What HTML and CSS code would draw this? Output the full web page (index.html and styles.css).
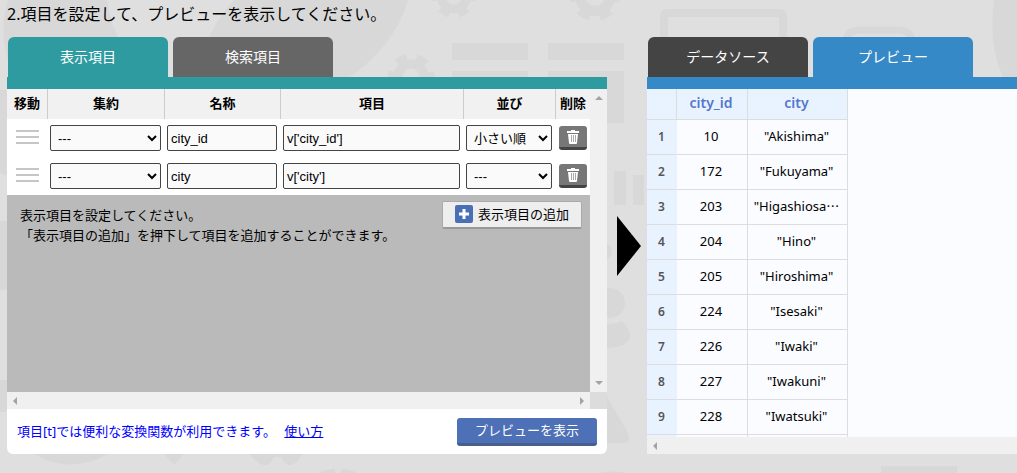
FILE: index.html
```html
<!DOCTYPE html>
<html lang="ja">
<head>
<meta charset="utf-8">
<title>項目設定</title>
<link rel="stylesheet" href="styles.css">
</head>
<body>
<svg class="backdrop" viewBox="0 0 1017 473" preserveAspectRatio="xMinYMin slice" aria-hidden="true">
  <g fill="#d8d8d8">
    <path d="M8 0H107Q110 25 124 48Q140 75 170 90H22Q-6 45 8 0Z"/>
    <path d="M0 90H7V175Q3 176 0 172ZM0 221H7V290H0ZM0 380H7V412H0Z"/>
    <path d="M234 0H408Q395 45 350 77H195Q206 30 234 0Z"/>
    <path d="M452 43h76v17h-76zM548 43h76v17h-76zM452 71h76v17h-76zM548 71h76v52h-76z"/>
    <path d="M614 171h12v34h-12zM633 175h11v30h-11z"/>
    <circle cx="610" cy="303" r="15"/><circle cx="603" cy="251" r="9"/>
    <path d="M600 324Q614 325 622 321Q631 330 630 338Q625 349 600 348Z"/>
    <path d="M603 390L628 433Q631 441 625 443H600Z"/>
    <path d="M34 454H108Q70 475 34 454ZM164 454h20l-10 11zM250 454h52q-6 12-13 11-4-1-8-8l-7 0q-5 10-10 8-7-1-14-11z"/>
    <path d="M1017 0H994Q988 45 1003 77H1017ZM881 466h76v7h-76z"/>
    <path d="M318 473q4-3 17-4v4zM341 469q10 0 16 4h-16zM598 473q16-3 28 0z"/>
  </g>
  <path d="M664 40V16q0-3 3-3H780q3 0 3 3V40" fill="none" stroke="#d8d8d8" stroke-width="8"/>
  <path d="M846 40q2-10 14-10h38q12 0 14 10" fill="none" stroke="#d8d8d8" stroke-width="7"/>
  <g fill="none" stroke="#d8d8d8">
    <circle cx="454" cy="-4" r="13" stroke-width="9"/>
    <circle cx="454" cy="-4" r="19" stroke-width="6" stroke-dasharray="10 9.9" stroke-dashoffset="5"/>
    <circle cx="595" cy="-4" r="15" stroke-width="10"/>
    <circle cx="595" cy="-4" r="22" stroke-width="6" stroke-dasharray="12 11.04" stroke-dashoffset="6"/>
    <circle cx="411" cy="77" r="13" stroke-width="9"/>
    <circle cx="411" cy="77" r="20" stroke-width="7" stroke-dasharray="11 9.94" stroke-dashoffset="5.5"/>
  </g>
</svg>
<main class="page">
  <h1 class="title">2.項目を設定して、プレビューを表示してください。</h1>
  <div class="columns">
    <section class="editor">
      <nav class="tabs">
        <button class="tab tab-teal" type="button">表示項目</button>
        <button class="tab tab-gray" type="button">検索項目</button>
      </nav>
      <div class="panel panel-teal">
        <div class="scroll-area">
          <div class="scroll-content">
            <table class="fields">
              <colgroup><col class="c-move"><col class="c-agg"><col class="c-name"><col><col class="c-sort"><col class="c-del"></colgroup>
              <thead><tr><th>移動</th><th>集約</th><th>名称</th><th>項目</th><th>並び</th><th>削除</th></tr></thead>
              <tbody>
                <tr>
                  <td><span class="handle"></span></td>
                  <td><select class="field select" aria-label="集約"><option>---</option></select></td>
                  <td><input class="field" type="text" aria-label="名称" value="city_id"></td>
                  <td><input class="field" type="text" aria-label="項目" value="v['city_id']"></td>
                  <td><select class="field select" aria-label="並び"><option>小さい順</option></select></td>
                  <td class="cell-del"><button class="delete" type="button" aria-label="削除"><svg width="12" height="14" viewBox="0 0 12 14"><path fill="#fff" d="M4 0h4v1h4v2H0V1h4zM1 4h10l-1 9q0 1-1 1H3q-1 0-1-1z"/><path stroke="#aaa" d="M4.500 5v7M6.500 5v7M8.500 5v7"/></svg></button></td>
                </tr>
                <tr>
                  <td><span class="handle"></span></td>
                  <td><select class="field select" aria-label="集約"><option>---</option></select></td>
                  <td><input class="field" type="text" aria-label="名称" value="city"></td>
                  <td><input class="field" type="text" aria-label="項目" value="v['city']"></td>
                  <td><select class="field select" aria-label="並び"><option>---</option></select></td>
                  <td class="cell-del"><button class="delete" type="button" aria-label="削除"><svg width="12" height="14" viewBox="0 0 12 14"><path fill="#fff" d="M4 0h4v1h4v2H0V1h4zM1 4h10l-1 9q0 1-1 1H3q-1 0-1-1z"/><path stroke="#aaa" d="M4.500 5v7M6.500 5v7M8.500 5v7"/></svg></button></td>
                </tr>
              </tbody>
            </table>
            <div class="guide">
              <p class="guide-text">表示項目を設定してください。<br>「表示項目の追加」を押下して項目を追加することができます。</p>
              <button class="add" type="button"><svg width="18" height="18" viewBox="0 0 18 18"><rect width="18" height="18" rx="2" fill="#4a6fb5"/><path d="M9 4v10M4 9h10" stroke="#fff" stroke-width="3"/></svg>表示項目の追加</button>
            </div>
          </div>
          <div class="bar-v"><i class="tri up"></i><i class="tri down"></i></div>
          <div class="bar-h"><i class="tri left"></i><i class="tri right"></i></div>
          <div class="corner"></div>
        </div>
        <footer class="foot">
          <p class="hint">項目[t]では便利な変換関数が利用できます。 <a class="link" href="#">使い方</a></p>
          <button class="run" type="button">プレビューを表示</button>
        </footer>
      </div>
    </section>
    <svg class="arrow" width="24" height="60" viewBox="0 0 24 60" aria-hidden="true"><path d="M0 0L24 30L0 60Z"/></svg>
    <section class="preview">
      <nav class="tabs">
        <button class="tab tab-dark" type="button">データソース</button>
        <button class="tab tab-blue" type="button">プレビュー</button>
      </nav>
      <div class="panel panel-blue">
        <div class="sheet">
          <table class="data">
            <colgroup><col class="d-no"><col class="d-id"><col class="d-city"></colgroup>
            <thead><tr><th></th><th>city_id</th><th>city</th></tr></thead>
            <tbody>
              <tr><th>1</th><td>10</td><td>"Akishima"</td></tr>
              <tr><th>2</th><td>172</td><td>"Fukuyama"</td></tr>
              <tr><th>3</th><td>203</td><td>"Higashiosa⋯</td></tr>
              <tr><th>4</th><td>204</td><td>"Hino"</td></tr>
              <tr><th>5</th><td>205</td><td>"Hiroshima"</td></tr>
              <tr><th>6</th><td>224</td><td>"Isesaki"</td></tr>
              <tr><th>7</th><td>226</td><td>"Iwaki"</td></tr>
              <tr><th>8</th><td>227</td><td>"Iwakuni"</td></tr>
              <tr><th>9</th><td>228</td><td>"Iwatsuki"</td></tr>
              <tr><th></th><td></td><td></td></tr>
            </tbody>
          </table>
        </div>
        <div class="bar-h"><i class="tri left"></i></div>
      </div>
    </section>
  </div>
</main>
</body>
</html>
```
FILE: styles.css
```css
* { box-sizing: border-box; }
body {
  margin: 0;
  background: #dfdfdf;
  color: #000;
  font: 13px/20px "Noto Sans", "Noto Sans CJK JP", sans-serif;
  overflow: hidden;
}
button, input, select { font: inherit; margin: 0; }
p { margin: 0; }
.backdrop { position: absolute; inset: 0; width: 100%; height: 100%; z-index: -1; }
.page { padding: 2px 0 0 7px; }
.title { margin: 0; font-size: 16px; line-height: 24px; font-weight: 400; }
.columns { display: flex; gap: 10px; padding-top: 11px; }
.editor { flex: 0 0 600px; }
.preview { flex: 1; min-width: 0; margin-left: -4px; }
.arrow { align-self: center; display: block; flex: none; }

.tabs { display: flex; gap: 5px; padding-left: 1px; }
.tab {
  width: 160px; height: 40px; padding: 0;
  border: 0; border-radius: 6px 6px 0 0;
  color: #fff; font-size: 14px;
}
.tab-teal { background: #2e9ba0; }
.tab-gray { background: #666; }
.tab-dark { background: #444; }
.tab-blue { background: #3589c6; }
.panel { border-top: 12px solid; background: #fff; }
.panel-teal { border-color: #2e9ba0; border-radius: 0 0 6px 6px; }
.panel-blue { border-color: #3589c6; background: #fbfcff; }

.scroll-area { display: grid; grid-template-columns: 1fr 17px; grid-template-rows: 303px 17px; }
.scroll-content { display: flex; flex-direction: column; background: #bababa; }
.bar-v, .bar-h { display: flex; justify-content: space-between; align-items: center; background: #f0f0f0; }
.bar-v { flex-direction: column; padding: 7px 0; }
.bar-h { height: 17px; padding: 0 6px; }
.corner { background: #dcdcdc; }
.tri { display: block; border: 4px solid transparent; }
.up { border-top: 0; border-bottom-color: #a3a3a3; }
.down { border-bottom: 0; border-top-color: #a3a3a3; }
.left { border-left: 0; border-right-color: #a3a3a3; }
.right { border-right: 0; border-left-color: #a3a3a3; }

.fields { width: 100%; table-layout: fixed; border-collapse: separate; border-spacing: 0; background: #fff; }
.c-move { width: 41px; }
.c-agg { width: 117px; }
.c-name { width: 116px; }
.c-sort { width: 92px; }
.c-del { width: 34px; }
.fields th { height: 30px; padding: 0 0 2px; background: #f1f1f1; border-right: 1px solid #ccc; }
.fields th:last-child { border-right: 0; }
.fields td { height: 38px; padding: 0 4px 0 2px; vertical-align: middle; }
.fields .cell-del { padding: 0 3px; }
.field {
  display: block; width: 100%; height: 26px; padding: 0 3px;
  border: 1px solid #444; border-radius: 2px;
  background: #fafafa; color: #000;
  font: 13px "Liberation Sans", "Noto Sans CJK JP", sans-serif;
}
.select { padding: 0 0 0 3px; }
.handle {
  display: block; width: 23px; height: 14px; margin: 0 0 3px 7px;
  border: solid #c6c6c6; border-width: 2px 0;
  background: linear-gradient(#c6c6c6, #c6c6c6) center / 100% 2px no-repeat;
}
.delete {
  display: grid; place-items: center; width: 28px; height: 24px; padding: 0;
  border: 0; border-bottom: 3px solid #444; border-radius: 3px; background: #777;
}

.guide { display: flex; justify-content: space-between; align-items: flex-start; padding: 6px 8px 0 13px; }
.guide-text { padding-top: 4px; }
.add {
  display: flex; align-items: center; justify-content: center; gap: 5px;
  width: 140px; height: 28px; padding: 0 0 1px; flex: none;
  border: 1px solid #aaa; border-bottom: 2px solid #999; border-radius: 2px;
  background: #eee; color: #000;
}
.foot { display: flex; justify-content: space-between; align-items: center; height: 45px; padding: 0 10px; }
.hint { color: #00f; padding-bottom: 2px; }
.link { color: #00e; margin-left: 5px; }
.run {
  width: 140px; height: 28px; padding: 0;
  border: 0; border-bottom: 3px solid #465f8c; border-radius: 3px;
  background: #4d70b6; color: #fff;
}

.sheet { height: 348px; overflow: hidden; }
.data { width: 201px; table-layout: fixed; border-collapse: separate; border-spacing: 0; text-align: center; }
.d-no { width: 30px; }
.d-id { width: 71px; }
.d-city { width: 100px; }
.data th, .data td { height: 35px; padding: 0 2px 2px 0; border-right: 1px solid #ddd; border-bottom: 1px solid #ddd; white-space: nowrap; }
.data th { background: #e8f3ff; }
.data thead th { height: 31px; color: #5577cc; font-size: 14px; font-weight: 600; }
.data thead th:first-child { border-right-color: #ddd; }
.data tbody th { padding: 0; border-right-color: #e8f3ff; color: #555; font-size: 12px; font-weight: 600; }
```
